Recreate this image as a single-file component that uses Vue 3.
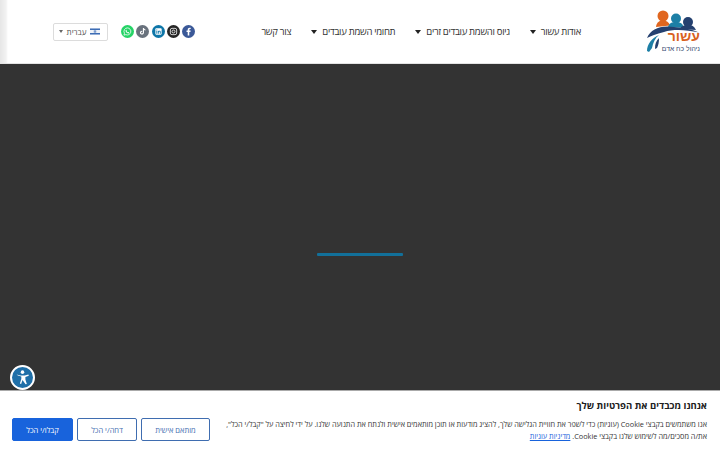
<script setup>
const nav = [
  { label: 'אודות עשור', caret: true },
  { label: 'גיוס והשמת עובדים זרים', caret: true },
  { label: 'תחומי השמת עובדים', caret: true },
  { label: 'צור קשר', caret: false },
]
</script>

<template>
  <div class="page">
    <header class="header">
      <div class="logo">
        <svg width="56" height="46" viewBox="0 0 56 46">
          <circle cx="19" cy="9" r="5.500" fill="#e0661f"/>
          <path d="M12 20c.5-5 3.500-6.500 7-6.500s6 1.500 7 5z" fill="#e0661f"/>
          <circle cx="32" cy="11.500" r="5" fill="#1d7fa6"/>
          <path d="M24 20c1-4 4-5 8-5s7 1.500 8 6z" fill="#1d7fa6"/>
          <circle cx="44" cy="15" r="5" fill="#24406f"/>
          <path d="M36 22c1-3 4-4 8-4s6 1 8 5z" fill="#24406f"/>
          <path d="M3 31C7 22 16 18 30 20c9 1 17 2 25 5.500-13-3-26-3.500-35-.5-8 2-13 4-17 6z" fill="#24406f"/>
          <path d="M3 44c0-7 5-13 12-16-4 3-6 8-7 13l-3 4z" fill="#1d7fa6"/>
          <path d="M11 42c0-5 1-8 4-11 0 4-.5 7-2 10z" fill="#24406f"/>
          <text x="56" y="34" class="logo-main" text-anchor="start" direction="rtl">עשור</text>
          <text x="56" y="44" class="logo-sub" text-anchor="start" direction="rtl">ניהול כח אדם</text>
        </svg>
      </div>

      <nav class="nav">
        <a v-for="item in nav" :key="item.label" class="nav-item">
          <span>{{ item.label }}</span>
          <i v-if="item.caret" class="caret"></i>
        </a>
      </nav>

      <div class="socials">
        <span class="soc fb">
          <svg viewBox="0 0 14 14" width="14" height="14"><path d="M8 12V7.600h1.500l.2-1.800H8V4.700c0-.5.200-.8.900-.8h.9V2.300C9.500 2.200 9 2.200 8.500 2.200 7 2.200 6 3.100 6 4.500v1.300H4.500v1.800H6V12z" fill="#fff"/></svg>
        </span>
        <span class="soc ig">
          <svg viewBox="0 0 14 14" width="14" height="14" fill="none" stroke="#fff" stroke-width="1"><rect x="3" y="3" width="8" height="8" rx="2"/><circle cx="7" cy="7" r="1.900"/></svg>
        </span>
        <span class="soc li">
          <svg viewBox="0 0 14 14" width="14" height="14"><rect x="3" y="3" width="8" height="8" rx="1" fill="#fff"/><path d="M4.300 6.200h1.100v3.600H4.300zM4.300 4.300h1.100v1.100H4.300zM6.200 6.200h1v.5c.3-.4.700-.6 1.200-.6 1 0 1.400.6 1.400 1.600v2.100H8.700V8c0-.5-.2-.9-.6-.9-.5 0-.8.300-.8.900v1.800H6.200z" fill="#0e76a8"/></svg>
        </span>
        <span class="soc tt">
          <svg viewBox="0 0 14 14" width="14" height="14"><path d="M7.500 2.500h1.400c.1 1.100.8 1.800 1.900 1.900v1.400c-.7 0-1.300-.2-1.900-.6v3c0 1.600-1.100 2.700-2.600 2.700S3.700 9.800 3.700 8.500c0-1.500 1.300-2.700 3-2.500v1.500c-.9-.2-1.500.3-1.500 1 0 .6.500 1.100 1.100 1.100.7 0 1.200-.5 1.200-1.200z" fill="#fff"/></svg>
        </span>
        <span class="soc wa">
          <svg viewBox="0 0 14 14" width="14" height="14"><path d="M7 2.400a4.500 4.500 0 0 0-3.900 6.800l-.6 2.400 2.400-.6A4.500 4.500 0 1 0 7 2.400z" fill="none" stroke="#fff" stroke-width="1"/><path d="M5.300 4.800c.3 0 .4.100.5.400l.3.700-.4.600c.4.800 1 1.300 1.800 1.700l.6-.5.800.4c.3.100.3.300.2.600-.2.500-.7.800-1.200.7-1.800-.3-3.100-1.600-3.400-3.200 0-.6.300-1.200.8-1.400z" fill="#fff"/></svg>
        </span>
      </div>

      <div class="lang">
        <span class="lang-arrow"></span>
        <span class="lang-text">עברית</span>
        <svg width="10" height="7" viewBox="0 0 10 7" class="flag">
          <rect width="10" height="7" fill="#eef2f8"/>
          <rect y=".5" width="10" height="1.500" fill="#3d6db5"/>
          <rect y="5" width="10" height="1.500" fill="#3d6db5"/>
          <path d="M5 2.300l1.100 1.900H3.900zM5 4.700L3.900 2.800h2.200z" fill="none" stroke="#3d6db5" stroke-width=".4"/>
        </svg>
      </div>
    </header>

    <main class="main">
      <div class="loader"></div>
      <button class="a11y" aria-label="נגישות">
        <svg viewBox="0 0 20 20" width="20" height="20">
          <circle cx="10" cy="3.700" r="2.100" fill="#fff"/>
          <path d="M3 6.500l4.500 1.100h5L17 6.500l.4 1.500-4 1.300v3l1.700 5.200-1.500.5L10 13l-1.600 4.500-1.500-.5 1.700-5.200v-3l-4-1.300z" fill="#fff"/>
        </svg>
      </button>
    </main>

    <section class="cookie">
      <div class="actions">
        <button class="btn solid">קבלו/י הכל</button>
        <button class="btn">דחה/י הכל</button>
        <button class="btn">מותאם אישית</button>
      </div>
      <div class="copy" dir="rtl">
        <h2>אנחנו מכבדים את הפרטיות שלך</h2>
        <p>אנו משתמשים בקבצי Cookie (עוגיות) כדי לשפר את חוויית הגלישה שלך, להציג מודעות או תוכן מותאמים אישית ולנתח את התנועה שלנו. על ידי לחיצה על "קבל/י הכל", את/ה מסכים/מה לשימוש שלנו בקבצי Cookie. <a>מדיניות עוגיות</a></p>
      </div>
    </section>
  </div>
</template>

<style>
html, body { margin: 0; background: #333; }
</style>

<style scoped>
.page {
  width: 720px;
  height: 450px;
  overflow: hidden;
  display: flex;
  flex-direction: column;
  font-family: "Open Sans", "Liberation Sans", "DejaVu Sans", sans-serif;
}
.header {
  height: 64px;
  flex: none;
  box-sizing: border-box;
  display: flex;
  flex-direction: row-reverse;
  align-items: center;
  justify-content: space-between;
  padding: 0 20px 0 53px;
  background: linear-gradient(90deg, #e6e6e6 0, #f2f2f2 6px, #fff 8px);
  border-bottom: 1px solid #e4e4e4;
}
.logo { width: 56px; height: 46px; display: flex; margin-bottom: 4px; }
.logo-main { font: 700 14px "Liberation Sans", sans-serif; fill: #d9621e; }
.logo-sub { font: 400 6.800px "Liberation Sans", sans-serif; fill: #33486e; }
.nav {
  display: flex;
  flex-direction: row-reverse;
  gap: 20px;
  margin-left: auto;
  margin-right: 63px;
}
.nav-item {
  display: flex;
  align-items: center;
  gap: 5px;
  flex-direction: row;
  direction: ltr;
  font-size: 9.500px;
  letter-spacing: -0.3px;
  color: #333;
  white-space: nowrap;
  text-decoration: none;
}
.caret {
  order: -1;
  width: 0;
  height: 0;
  border-left: 3.500px solid transparent;
  border-right: 3.500px solid transparent;
  border-top: 4px solid #222;
}
.socials {
  display: flex;
  flex-direction: row-reverse;
  gap: 2.250px;
  margin-left: 13px;
}
.soc {
  width: 13px;
  height: 13px;
  border-radius: 50%;
  display: flex;
  align-items: center;
  justify-content: center;
}
.soc svg { width: 11px; height: 11px; }
.fb { background: #3b5998; }
.ig { background: #262626; }
.li { background: #0e76a8; }
.tt { background: #69727d; }
.wa { background: #25d366; }
.lang {
  order: 1;
  width: 55px;
  height: 18px;
  box-sizing: border-box;
  border: 1px solid #dcdcdc;
  border-radius: 2px;
  background: #fff;
  display: flex;
  align-items: center;
  padding: 0 7px 0 5px;
  gap: 3px;
}
.lang-arrow {
  width: 0;
  height: 0;
  border-left: 2px solid transparent;
  border-right: 2px solid transparent;
  border-top: 3px solid #666;
}
.lang-text { font-size: 8px; color: #555; flex: 1; text-align: center; }
.flag { flex: none; }
.main {
  position: relative;
  flex: 1;
  background: #333;
  display: flex;
  justify-content: center;
  padding-top: 189px;
  box-sizing: border-box;
}
.loader {
  width: 86px;
  height: 3px;
  background: #12709a;
  border-radius: 1px;
}
.a11y {
  position: absolute;
  left: 10px;
  bottom: 0;
  width: 25px;
  height: 25px;
  padding: 0;
  box-sizing: border-box;
  border-radius: 50%;
  border: 2px solid #fff;
  background: #1f6fa8;
  display: flex;
  align-items: center;
  justify-content: center;
}
.a11y svg { width: 17px; height: 17px; }
.cookie {
  flex: none;
  height: 60px;
  box-sizing: border-box;
  background: #fff;
  border-top: 1px solid #aaa;
  display: flex;
  align-items: flex-start;
  padding: 0 13px 0 12px;
  gap: 12px;
}
.actions {
  display: flex;
  gap: 4px;
  margin-top: 27px;
  flex: none;
}
.btn {
  height: 23px;
  box-sizing: border-box;
  padding: 0;
  width: 60px;
  border: 1.500px solid #3f6db0;
  border-radius: 2px;
  background: #fff;
  color: #3f6db0;
  font: 400 7.500px "Open Sans", "Liberation Sans", sans-serif;
}
.btn:nth-child(3) { width: 69px; }
.solid { width: 61px; background: #1863dc; border-color: #1863dc; color: #fff; }
.copy { flex: 1; min-width: 0; padding-top: 9px; }
h2 { margin: 0 0 6px; font-size: 9.500px; line-height: 12px; font-weight: 700; color: #212121; }
p { margin: 0; font-size: 7.300px; line-height: 12px; color: #333; }
a { color: #1863dc; text-decoration: underline; }
</style>
